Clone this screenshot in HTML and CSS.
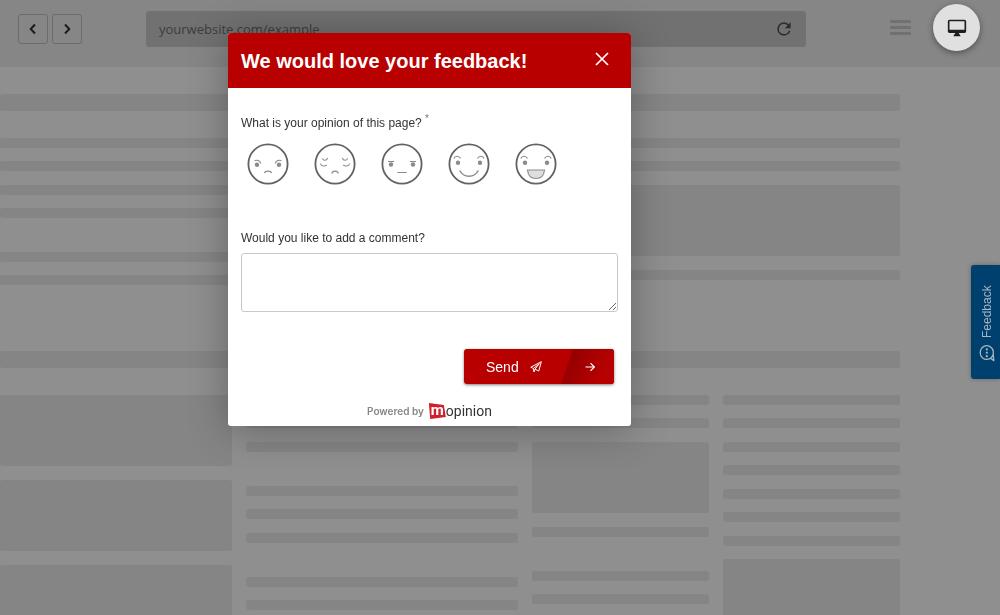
FILE: index.html
```html
<!DOCTYPE html>
<html lang="en">
<head>
<meta charset="utf-8">
<title>Feedback form preview</title>
<link rel="stylesheet" href="styles.css">
</head>
<body>
<header class="browser">
  <nav class="history">
    <button class="nav-btn" type="button" aria-label="Back"><svg width="10" height="12" viewBox="0 0 10 12"><path d="M7 1.5 2.7 6 7 10.500"/></svg></button>
    <button class="nav-btn" type="button" aria-label="Forward"><svg width="10" height="12" viewBox="0 0 10 12"><path d="M3 1.500 7.300 6 3 10.500"/></svg></button>
  </nav>
  <div class="address">
    <span>yourwebsite.com/example</span>
    <button class="plain" type="button" aria-label="Reload"><svg width="20" height="20" viewBox="0 0 24 24"><path fill="#2e2e2e" d="M17.650 6.350A7.960 7.960 0 0 0 12 4a8 8 0 1 0 7.730 10h-2.080A6 6 0 1 1 12 6c1.660 0 3.140.69 4.220 1.780L13 11h7V4z"/></svg></button>
  </div>
  <button class="plain menu" type="button" aria-label="Menu"><i></i><i></i><i></i></button>
  <button class="device" type="button" aria-label="Desktop view"><svg width="20" height="20" viewBox="0 0 24 24"><path fill="#1d1f1f" d="M21 2H3a2 2 0 0 0-2 2v12c0 1.100.9 2 2 2h7l-2 3v1h8v-1l-2-3h7a2 2 0 0 0 2-2V4a2 2 0 0 0-2-2zm0 12H3V4h18z"/></svg></button>
</header>

<main class="site">
  <div class="bar thick"></div>
  <div class="lines intro"><div class="bar"></div><div class="bar"></div></div>
  <div class="feature">
    <div class="stack"><div class="lines"><div class="bar"></div><div class="bar"></div></div><div class="lines"><div class="bar"></div><div class="bar"></div></div></div>
    <div class="lines"><div class="block"></div><div class="bar"></div></div>
  </div>
  <div class="bar thick"></div>
  <div class="columns">
    <div class="lines"><div class="block"></div><div class="block"></div><div class="block"></div></div>
    <div class="stack">
      <div class="lines"><div class="bar"></div><div class="bar"></div><div class="bar"></div></div>
      <div class="lines"><div class="bar"></div><div class="bar"></div><div class="bar"></div></div>
      <div class="lines"><div class="bar"></div><div class="bar"></div></div>
    </div>
    <div class="stack">
      <div class="lines"><div class="bar"></div><div class="bar"></div><div class="block"></div><div class="bar"></div></div>
      <div class="lines"><div class="bar"></div><div class="bar"></div></div>
    </div>
    <div class="lines"><div class="bar"></div><div class="bar"></div><div class="bar"></div><div class="bar"></div><div class="bar"></div><div class="bar"></div><div class="bar"></div><div class="block"></div></div>
  </div>
</main>

<button class="tab" type="button">
  <svg width="16" height="18" viewBox="0 0 16 18"><path d="M3.600 14A6.600 7 0 1 1 11.600 14.300L14.800 16.600 14.200 10.500" fill="none" stroke="#a9b6c1" stroke-width="1.300" stroke-linejoin="round"/><path d="M3.600 14Q7 16.500 11.600 14.300" fill="none" stroke="#a9b6c1" stroke-width="1.300"/><g fill="#a9b6c1"><circle cx="7.800" cy="5.300" r="1.100"/><circle cx="7.800" cy="8.700" r="1.100"/><circle cx="7.800" cy="12.100" r="1.100"/></g></svg>
  <span>Feedback</span>
</button>

<form class="modal" role="dialog" aria-labelledby="title">
  <div class="modal-head">
    <h1 id="title">We would love your feedback!</h1>
    <button class="plain close" type="button" aria-label="Close"><svg width="14" height="14" viewBox="0 0 14 14"><path d="M1 1 13 13M13 1 1 13" stroke="#fff" stroke-width="1.700"/></svg></button>
  </div>
  <div class="modal-body">
    <fieldset class="rating">
      <legend>What is your opinion of this page? <sup>*</sup></legend>
      <div class="faces">
        <label><input type="radio" name="opinion" aria-label="Very poor"><svg viewBox="0 0 42 42"><circle class="ring" cx="21" cy="21" r="19.600"/><g class="eye"><circle cx="10" cy="21.700" r="2.200"/><circle cx="32" cy="21.700" r="2.200"/></g><path class="line" d="M7.500 17.700C10 16.500 13 17.500 13.800 20.500M34.500 17.700C32 16.500 29 17.500 28.200 20.500M17.300 30C18.200 27.500 23.800 27.500 24.700 30"/></svg></label>
        <label><input type="radio" name="opinion" aria-label="Poor"><svg viewBox="0 0 42 42"><circle class="ring" cx="21" cy="21" r="19.600"/><path class="line" d="M8.300 15.500C9.500 18 12.500 18 13.700 15M28.300 15C29.500 18 32.500 18 33.700 15.500M6.300 20.500C7 23.500 11 23.500 12.800 22M35.700 20.500C35 23.500 31 23.500 29.200 22M17.700 30.500C18.500 27.300 23.500 27.300 24.300 30.500"/></svg></label>
        <label><input type="radio" name="opinion" aria-label="Neutral"><svg viewBox="0 0 42 42"><circle class="ring" cx="21" cy="21" r="19.600"/><g class="eye"><circle cx="10" cy="21.500" r="2.200"/><circle cx="32" cy="21.500" r="2.200"/></g><path class="line" d="M7 18.500H13M29 18.500H35M16.300 29.500H25.700"/></svg></label>
        <label><input type="radio" name="opinion" aria-label="Good"><svg viewBox="0 0 42 42"><circle class="ring" cx="21" cy="21" r="19.600"/><g class="eye"><circle cx="10" cy="19.800" r="2.200"/><circle cx="32" cy="19.800" r="2.200"/></g><path class="line" d="M5.800 15.500C7 12.500 11 12.500 12.500 15.500M29.500 15.500C31 12.500 35 12.500 36.200 15.500"/><path class="line smile" d="M11.700 27.500C15.500 35 26.500 35 30.300 27.500"/></svg></label>
        <label><input type="radio" name="opinion" aria-label="Very good"><svg viewBox="0 0 42 42"><circle class="ring" cx="21" cy="21" r="19.600"/><g class="eye"><circle cx="10" cy="19.800" r="2.200"/><circle cx="32" cy="19.800" r="2.200"/></g><path class="line" d="M5.800 15.500C7 12.500 11 12.500 12.500 15.500M29.500 15.500C31 12.500 35 12.500 36.200 15.500"/><path class="line mouth" d="M12.500 27H29.500C29 32.500 26 35.500 21 35.500S13 32.500 12.500 27Z"/></svg></label>
      </div>
    </fieldset>
    <label class="question" for="comment">Would you like to add a comment?</label>
    <textarea id="comment"></textarea>
    <button class="send" type="submit">
      <span class="send-main">Send <svg width="12" height="12" viewBox="0 0 12 12"><path d="M11.300.7.8 6.200 3.400 7.500 9.300 2.700 5 8.200 8.800 10ZM3.400 7.500 4 11 5 8.200" fill="none" stroke="#fff" stroke-linejoin="round"/></svg></span>
      <span class="send-next"><svg width="10" height="10" viewBox="0 0 10 10"><path d="M.5 5H9.300M5.500 1.200 9.300 5 5.500 8.800" fill="none" stroke="#fff" stroke-width="1.200"/></svg></span>
    </button>
    <footer class="powered"><span>Powered by</span><a class="logo" href="#"><span class="logo-m">m</span>opinion</a></footer>
  </div>
</form>
</body>
</html>
```
FILE: styles.css
```css
* { box-sizing: border-box; }
body {
  margin: 0;
  height: 100vh;
  overflow: hidden;
  background: #8f8f8f;
  font-family: "Liberation Sans", Arial, sans-serif;
}
button { font-family: inherit; cursor: pointer; }
svg { display: block; }
.plain { border: 0; padding: 0; background: none; }

.browser {
  display: flex;
  align-items: center;
  height: 67px;
  padding: 0 20px 12px 18px;
  background: #868686;
}
.history { display: flex; gap: 4px; margin: 2px 64px 0 0; }
.nav-btn {
  display: grid;
  place-items: center;
  width: 30px;
  height: 30px;
  padding: 0;
  border: 1px solid #6b6b6b;
  border-radius: 3px;
  background: none;
}
.nav-btn path { fill: none; stroke: #1c1c1c; stroke-width: 2; }
.address {
  flex: 1;
  display: flex;
  align-items: center;
  justify-content: space-between;
  height: 36px;
  margin-top: 2px;
  padding: 0 12px 0 13px;
  border-radius: 3px;
  background: #717171;
  color: #3d3d3d;
  font: 13px "Open Sans", sans-serif;
}
.menu { display: grid; gap: 3px; margin: 0 22px 0 84px; }
.menu i { width: 21px; height: 3px; border-radius: 1px; background: #717171; }
.device {
  display: grid;
  place-items: center;
  width: 47px;
  height: 47px;
  padding: 0;
  border: 0;
  border-radius: 50%;
  background: #e0e0e0;
  box-shadow: 0 2px 6px rgba(0, 0, 0, .4);
}

.site { width: 90%; padding-top: 27px; }
.bar { height: 10px; border-radius: 3px; background: #858585; }
.block { height: 71px; border-radius: 3px; background: #858585; }
.thick { height: 17px; }
.lines > * { margin-bottom: 14px; }
.lines > :nth-child(odd) { margin-bottom: 13px; }
.lines > .block { margin-bottom: 14px; }
.lines > :last-child { margin-bottom: 0; }
.stack { display: grid; gap: 34px; align-content: start; }
.intro { margin: 27px 0 14px; }
.feature { display: grid; grid-template-columns: 1fr 1fr; gap: 14px; margin-bottom: 66px; }
.columns {
  display: grid;
  grid-template-columns: 232fr 272fr 177fr 177fr;
  gap: 14px;
  margin-top: 27px;
}

.tab {
  position: fixed;
  top: 265px;
  right: 0;
  display: flex;
  align-items: center;
  gap: 6px;
  width: 29px;
  height: 114px;
  padding: 17px 4px 17px 0;
  border: 0;
  border-radius: 0 3px 3px 0;
  background: #00406f;
  color: #a9b6c1;
  font-size: 12px;
  writing-mode: vertical-rl;
  transform: rotate(180deg);
  box-shadow: 0 0 4px rgba(0, 0, 0, .3);
}
.tab svg { transform: rotate(180deg); }

.modal {
  position: fixed;
  top: 33px;
  left: 228px;
  width: 403px;
  border-radius: 3px;
  overflow: hidden;
  background: #fff;
  box-shadow: 0 4px 40px rgba(0, 0, 0, .3);
}
.modal-head {
  display: flex;
  align-items: center;
  justify-content: space-between;
  height: 55px;
  padding: 0 22px 0 13px;
  background: #b80000;
  color: #fff;
}
.modal-head h1 { margin: 0; font-size: 20px; line-height: 24px; }
.close { margin-bottom: 4px; }
.modal-body { display: flex; flex-direction: column; padding: 27px 13px 6px; }
.rating { min-width: 0; margin: 0; padding: 0; border: 0; }
.rating legend, .question { padding: 0; color: #333; font-size: 12px; line-height: 16px; }
.rating sup { color: #5f7f99; font-size: 10px; line-height: 8px; }
.faces { display: flex; gap: 25px; padding: 12px 6px 0; }
.faces label { width: 42px; height: 42px; cursor: pointer; }
.faces input { position: absolute; opacity: 0; margin: 0; }
.ring { fill: none; stroke: #626262; stroke-width: 1.8; }
.eye { fill: #8b8b8b; }
.line { fill: none; stroke: #8b8b8b; stroke-width: 1.1; }
.smile { stroke-width: 1.5; }
.mouth { fill: #dedede; }
.question { margin-top: 45px; }
#comment {
  height: 59px;
  margin: 7px 0 37px;
  padding: 8px;
  border: 1px solid #c9c9c9;
  border-radius: 3px;
  background: #fff;
  font: 12px "Liberation Sans", Arial, sans-serif;
  resize: vertical;
}
.send {
  align-self: flex-end;
  display: flex;
  width: 150px;
  height: 35px;
  margin-right: 4px;
  padding: 0;
  border: 0;
  border-radius: 3px;
  overflow: hidden;
  background: #b80000;
  color: #fff;
  font-size: 14px;
  box-shadow: 0 1px 3px rgba(0, 0, 0, .5);
}
.send-main { flex: 1; display: flex; align-items: center; gap: 11px; padding-left: 22px; }
.send-next {
  display: grid;
  place-items: center;
  width: 53px;
  background: linear-gradient(115deg, #8b0000, #b80000 80%);
  clip-path: polygon(12px 0, 100% 0, 100% 100%, 0 100%);
  padding-left: 4px;
}
.powered {
  display: flex;
  align-items: center;
  justify-content: center;
  gap: 5px;
  margin-top: 18px;
  color: #858585;
  font: 600 10px/18px Inter, sans-serif;
}
.logo {
  display: flex;
  align-items: center;
  color: #333;
  font: 400 14px/18px Roboto, sans-serif;
  text-decoration: none;
}
.logo-m {
  width: 17px;
  height: 16px;
  background: #d0202a;
  color: #fff;
  font-weight: 700;
  font-size: 15px;
  line-height: 15px;
  text-align: center;
  clip-path: polygon(0 0, 88% 12%, 100% 88%, 8% 100%);
}
```
